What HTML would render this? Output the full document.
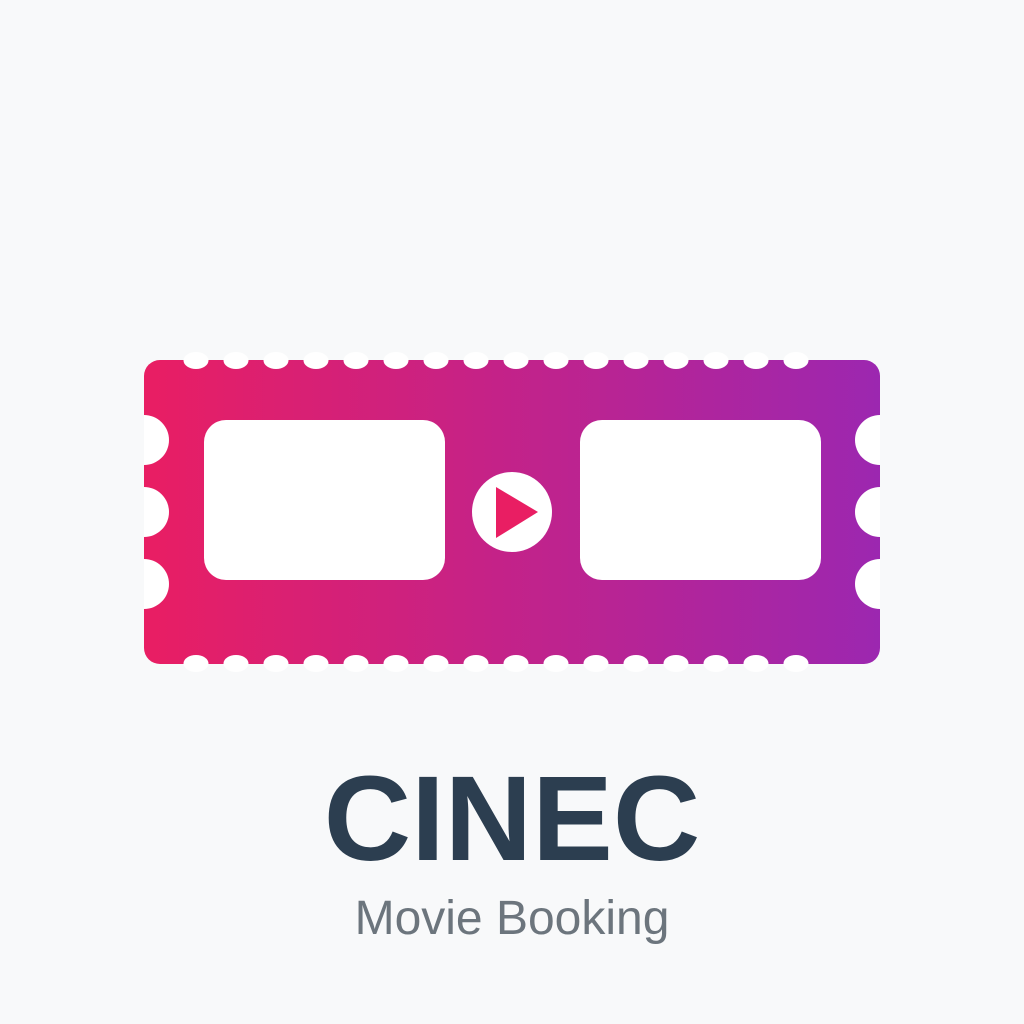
<!DOCTYPE html>
<html><head><style>
html,body{margin:0;padding:0;background:#f8f9fa;}
svg{display:block}
</style></head><body>
<svg width="1024" height="1024" viewBox="0 0 1024 1024" xmlns="http://www.w3.org/2000/svg">
<defs><linearGradient id="g" x1="144" y1="0" x2="880" y2="0" gradientUnits="userSpaceOnUse">
<stop offset="0" stop-color="#e91e63"/><stop offset="1" stop-color="#9c27b0"/></linearGradient>
<clipPath id="c"><rect x="144" y="360" width="736" height="304"/></clipPath></defs>
<rect width="1024" height="1024" fill="#f8f9fa"/>
<rect x="144" y="360" width="736" height="304" rx="16" fill="url(#g)"/>
<g fill="#ffffff">
<g id="row">
<ellipse cx="196" cy="360.5" rx="12.5" ry="8.5"/><ellipse cx="236" cy="360.5" rx="12.5" ry="8.5"/><ellipse cx="276" cy="360.5" rx="12.5" ry="8.5"/><ellipse cx="316" cy="360.5" rx="12.5" ry="8.5"/><ellipse cx="356" cy="360.5" rx="12.5" ry="8.5"/><ellipse cx="396" cy="360.5" rx="12.5" ry="8.5"/><ellipse cx="436" cy="360.5" rx="12.5" ry="8.5"/><ellipse cx="476" cy="360.5" rx="12.5" ry="8.5"/><ellipse cx="516" cy="360.5" rx="12.5" ry="8.5"/><ellipse cx="556" cy="360.5" rx="12.5" ry="8.5"/><ellipse cx="596" cy="360.5" rx="12.5" ry="8.5"/><ellipse cx="636" cy="360.5" rx="12.5" ry="8.5"/><ellipse cx="676" cy="360.5" rx="12.5" ry="8.5"/><ellipse cx="716" cy="360.5" rx="12.5" ry="8.5"/><ellipse cx="756" cy="360.5" rx="12.5" ry="8.5"/><ellipse cx="796" cy="360.5" rx="12.5" ry="8.5"/>
</g>
<use href="#row" transform="translate(0,303)"/>
<g clip-path="url(#c)">
<circle cx="144" cy="440" r="25"/><circle cx="144" cy="512" r="25"/><circle cx="144" cy="584" r="25"/>
<circle cx="880" cy="440" r="25"/><circle cx="880" cy="512" r="25"/><circle cx="880" cy="584" r="25"/>
</g>
<rect x="204" y="420" width="241" height="160" rx="22"/>
<rect x="580" y="420" width="241" height="160" rx="22"/>
<circle cx="512" cy="512" r="40"/>
</g>
<polygon points="496,487 538,512 496,538" fill="#e91e63"/>
<text x="512" y="860" text-anchor="middle" font-family="Liberation Sans, sans-serif" font-weight="bold" font-size="121" fill="#2c3e50">CINEC</text>
<text x="512" y="934" text-anchor="middle" font-family="Liberation Sans, sans-serif" font-size="48" fill="#6c757d">Movie Booking</text>
</svg>
</body></html>
